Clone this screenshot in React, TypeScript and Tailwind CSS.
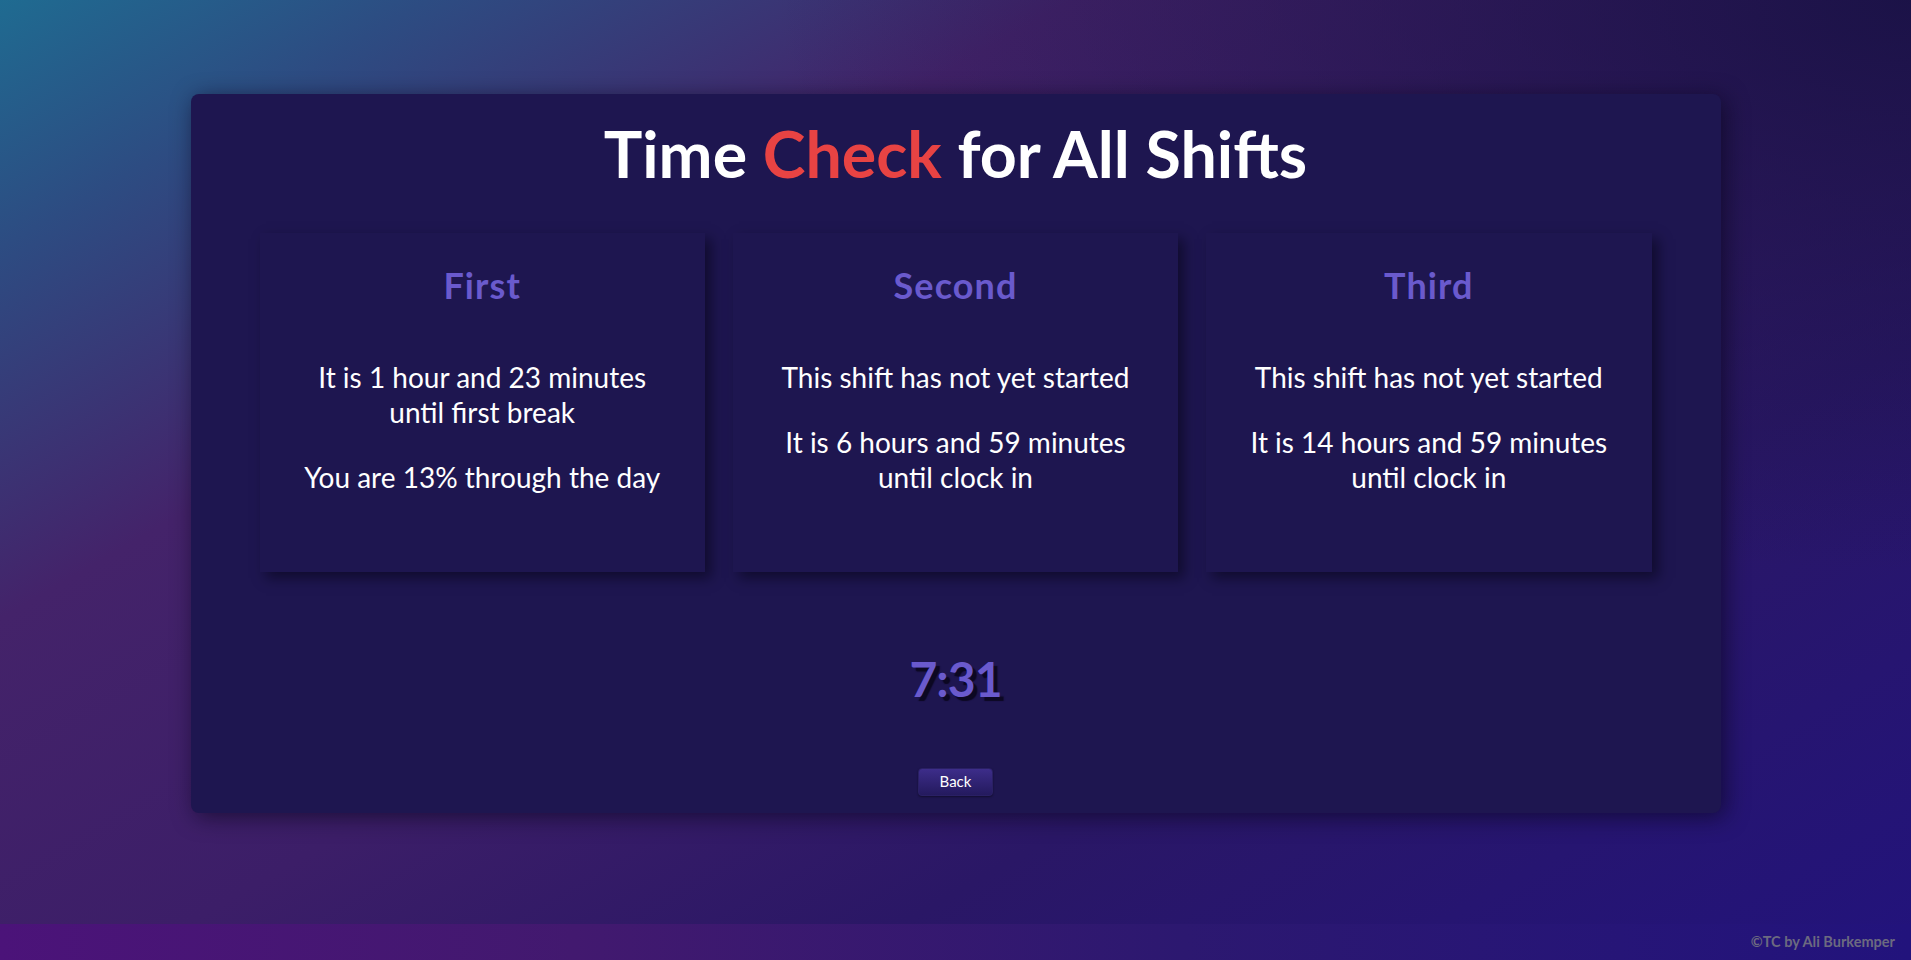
const shifts = [
  {
    name: "First",
    paras: ["It is 1 hour and 23 minutes until first break", "You are 13% through the day"],
  },
  {
    name: "Second",
    paras: ["This shift has not yet started", "It is 6 hours and 59 minutes until clock in"],
  },
  {
    name: "Third",
    paras: ["This shift has not yet started", "It is 14 hours and 59 minutes until clock in"],
  },
];

function ShiftCard({ name, paras }: { name: string; paras: string[] }) {
  return (
    <div className="flex h-[339px] flex-col items-center bg-[#1e1650] px-[36px] pt-[34px] text-center shadow-[6px_6px_12px_rgba(5,3,20,0.55)]">
      <h2 className="text-[36px] font-bold leading-none tracking-[0.03em] text-[#6a5acd]">{name}</h2>
      <div className="mt-[57px] flex flex-col gap-[30px]">
        {paras.map((p) => (
          <p key={p} className="text-[28px] leading-[35px] text-white">
            {p}
          </p>
        ))}
      </div>
    </div>
  );
}

export default function App() {
  return (
    <div className="flex h-[960px] w-full flex-col overflow-hidden [font-family:Lato,'Noto_Sans',sans-serif] [background-image:radial-gradient(ellipse_at_100%_0%,rgba(24,17,68,0.9)_0%,rgba(24,17,68,0)_42%),linear-gradient(150deg,#1f6b91_0%,#2d4c82_12%,#44236a_30%,#3c1e68_50%,#2a1766_70%,#22137c_100%)]">
      <main className="flex-1">
        <section className="mx-auto mt-[94px] flex w-[1530px] flex-col items-center rounded-[8px] bg-[#1e1650] px-[69px] pb-[17px] pt-[27px] shadow-[4px_4px_22px_rgba(8,5,25,0.6)]">
          <h1 className="text-[64.5px] font-bold leading-none text-white">
            Time <span className="text-[#e84343]">Check</span> for All Shifts
          </h1>
          <div className="mt-[47px] grid w-full grid-cols-3 gap-[28px]">
            {shifts.map((s) => (
              <ShiftCard key={s.name} name={s.name} paras={s.paras} />
            ))}
          </div>
          <div className="mt-[83px] text-[48px] font-bold leading-none tracking-[-0.02em] text-[#6a5acd] [text-shadow:4px_4px_1px_#0c0822]">
            7:31
          </div>
          <button className="mt-[65px] h-[28px] w-[75px] rounded-[4px] border border-[#2a2064] bg-gradient-to-b from-[#3d2d8a] to-[#241a5e] text-[15px] leading-none text-white shadow-[0_1px_2px_rgba(0,0,0,0.4)]">
            Back
          </button>
        </section>
      </main>
      <footer className="flex h-[36px] items-center justify-end pr-[16px] bg-[linear-gradient(90deg,#4b1379_0%,#42196f_30%,#2c1870_62%,#22137c_100%)]">
        <span className="text-[14.5px] font-bold leading-none text-[#6c6a80]">©TC by Ali Burkemper</span>
      </footer>
    </div>
  );
}
